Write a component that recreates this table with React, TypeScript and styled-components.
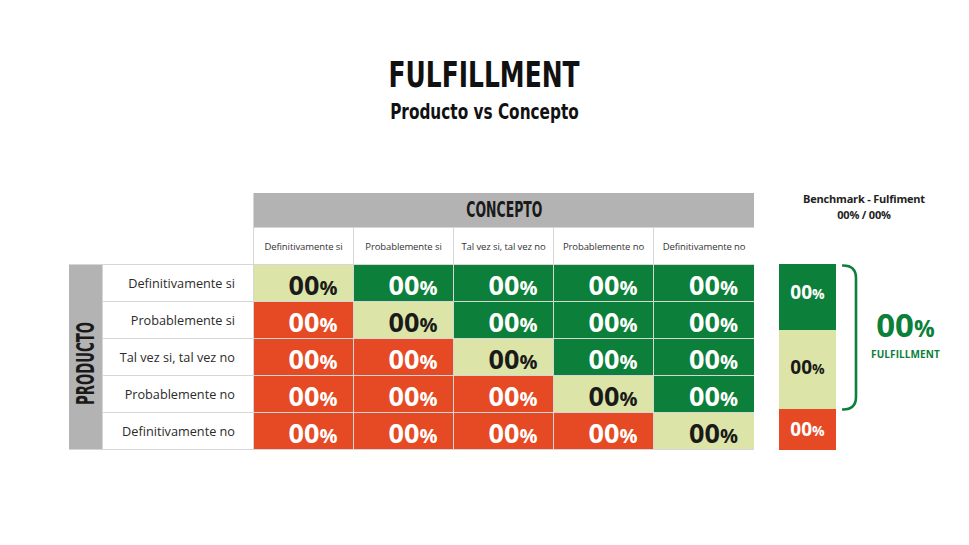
import React from "react";
import styled, { createGlobalStyle } from "styled-components";

const GREEN = "#0c7f3a";
const LIGHT = "#dce5a7";
const RED = "#e64a24";
const GRAY = "#b3b3b3";

const Global = createGlobalStyle`
  html, body { margin: 0; padding: 0; background: #fff; }
  body { font-family: "Open Sans", "Noto Sans", sans-serif; }
`;

const Page = styled.div`
  width: 969px;
  height: 545px;
  background: #fff;
  display: flex;
  flex-direction: column;
  overflow: hidden;
`;

const TitleBlock = styled.header`
  padding-top: 57px;
  display: flex;
  flex-direction: column;
  align-items: center;
  color: #111;
  font-family: "DejaVu Sans Condensed", "Liberation Sans", sans-serif;
  font-weight: 700;
`;

const Title = styled.h1`
  margin: 0;
  font-size: 36px;
  line-height: 36px;
  font-weight: 700;
  transform: scaleX(0.77);
  white-space: nowrap;
`;

const Subtitle = styled.h2`
  margin: 9px 0 0;
  font-size: 21px;
  line-height: 21px;
  font-weight: 700;
  transform: scaleX(0.81);
  white-space: nowrap;
`;

const Main = styled.main`
  display: flex;
  align-items: flex-start;
  padding-left: 69px;
  margin-top: 70px;
`;

const Table = styled.div`
  display: grid;
  grid-template-columns: 33px 150px 99px 99px 99px 99px 100px;
  grid-template-rows: 34px 36px repeat(5, 36px);
  gap: 1px;
  background: #d6d6d6;
  padding-bottom: 1px;
`;

const Corner = styled.div`
  grid-column: 1 / 3;
  grid-row: 1 / 3;
  background: #fff;
`;

const ConceptHeader = styled.div`
  grid-column: 3 / 8;
  grid-row: 1;
  background: ${GRAY};
  display: flex;
  align-items: center;
  justify-content: center;
`;

const CondensedLabel = styled.span<{ $scale: number; $size: number }>`
  display: inline-block;
  white-space: nowrap;
  font-family: "DejaVu Sans Condensed", "Liberation Sans", sans-serif;
  font-weight: 700;
  font-size: ${(p) => p.$size}px;
  line-height: 1;
  color: #1a1a1a;
  transform: scaleX(${(p) => p.$scale});
`;

const ProductBar = styled.div`
  grid-column: 1;
  grid-row: 3 / 8;
  background: ${GRAY};
  display: flex;
  align-items: center;
  justify-content: center;
  padding-top: 12px;
  overflow: visible;
`;

const VerticalLabel = styled(CondensedLabel)`
  transform: rotate(-90deg) scaleX(${(p) => p.$scale});
`;

const ColHeader = styled.div`
  background: #fff;
  display: flex;
  align-items: center;
  justify-content: center;
  font-size: 9.5px;
  color: #333;
  white-space: nowrap;
  letter-spacing: -0.1px;
`;

const RowLabel = styled.div`
  background: #fff;
  display: flex;
  align-items: center;
  justify-content: flex-end;
  padding-right: 18px;
  font-size: 12.7px;
  color: #2b2b2b;
  white-space: nowrap;
`;

type Tone = "g" | "l" | "r";

const toneBg = (t: Tone) => (t === "g" ? GREEN : t === "l" ? LIGHT : RED);
const toneFg = (t: Tone) => (t === "l" ? "#1a1a1a" : "#fff");

const Cell = styled.div<{ $tone: Tone }>`
  background: ${(p) => toneBg(p.$tone)};
  color: ${(p) => toneFg(p.$tone)};
  display: flex;
  align-items: center;
  justify-content: center;
  padding-left: 19px;
  padding-top: 3px;
`;

const Num = styled.span<{ $size: number; $lh?: string }>`
  font-family: "Open Sans", sans-serif;
  font-weight: 700;
  font-size: ${(p) => p.$size}px;
  line-height: ${(p) => p.$lh ?? "1"};
  white-space: nowrap;
`;

const Pct = styled.span<{ $size: number }>`
  font-size: ${(p) => p.$size}px;
  font-weight: 700;
`;

const Right = styled.aside`
  margin-left: 25px;
  width: 170px;
  display: flex;
  flex-direction: column;
`;

const BenchLabel = styled.div`
  height: 73px;
  margin-top: -2px;
  text-align: center;
  font-size: 11px;
  line-height: 16px;
  font-weight: 700;
  color: #222;
  letter-spacing: -0.2px;
`;

const BenchRow = styled.div`
  display: flex;
  align-items: flex-start;
`;

const BenchCol = styled.div`
  width: 57px;
  display: flex;
  flex-direction: column;
`;

const BenchBlock = styled.div<{ $tone: Tone; $h: number; $shift?: number }>`
  height: ${(p) => p.$h}px;
  background: ${(p) => toneBg(p.$tone)};
  color: ${(p) => toneFg(p.$tone)};
  display: flex;
  align-items: center;
  justify-content: center;
  padding-bottom: ${(p) => p.$shift ?? 0}px;
  box-sizing: border-box;
`;

const Bracket = styled.svg`
  display: block;
  margin-left: 6px;
  flex: none;
`;

const Summary = styled.div`
  width: 87px;
  height: 146px;
  display: flex;
  flex-direction: column;
  align-items: center;
  justify-content: center;
  padding-bottom: 12px;
  box-sizing: border-box;
  color: ${GREEN};
`;

const SummaryCaption = styled.div`
  font-size: 10px;
  line-height: normal;
  font-weight: 700;
  letter-spacing: 0.1px;
`;

const options = [
  "Definitivamente si",
  "Probablemente si",
  "Tal vez si, tal vez no",
  "Probablemente no",
  "Definitivamente no",
];

const matrix: Tone[][] = [
  ["l", "g", "g", "g", "g"],
  ["r", "l", "g", "g", "g"],
  ["r", "r", "l", "g", "g"],
  ["r", "r", "r", "l", "g"],
  ["r", "r", "r", "r", "l"],
];

const Value = ({ size, pct, lh }: { size: number; pct: number; lh?: string }) => (
  <Num $size={size} $lh={lh}>
    00<Pct $size={pct}>%</Pct>
  </Num>
);

export default function App() {
  return (
    <Page>
      <Global />
      <TitleBlock>
        <Title>FULFILLMENT</Title>
        <Subtitle>Producto vs Concepto</Subtitle>
      </TitleBlock>
      <Main>
        <Table>
          <Corner />
          <ConceptHeader>
            <CondensedLabel $size={22} $scale={0.63}>
              CONCEPTO
            </CondensedLabel>
          </ConceptHeader>
          {options.map((o, i) => (
            <ColHeader key={"h" + i} style={{ gridColumn: i + 3, gridRow: 2 }}>
              {o}
            </ColHeader>
          ))}
          <ProductBar>
            <VerticalLabel $size={25} $scale={0.59}>
              PRODUCTO
            </VerticalLabel>
          </ProductBar>
          {options.map((o, r) => (
            <React.Fragment key={"r" + r}>
              <RowLabel style={{ gridColumn: 2, gridRow: r + 3 }}>{o}</RowLabel>
              {matrix[r].map((t, c) => (
                <Cell key={c} $tone={t} style={{ gridColumn: c + 3, gridRow: r + 3 }}>
                  <Value size={27} pct={20} />
                </Cell>
              ))}
            </React.Fragment>
          ))}
        </Table>
        <Right>
          <BenchLabel>
            Benchmark - Fulfiment
            <br />
            00% / 00%
          </BenchLabel>
          <BenchRow>
            <BenchCol>
              <BenchBlock $tone="g" $h={66} $shift={10}>
                <Value size={19} pct={14} />
              </BenchBlock>
              <BenchBlock $tone="l" $h={79} $shift={4}>
                <Value size={19} pct={14} />
              </BenchBlock>
              <BenchBlock $tone="r" $h={41}>
                <Value size={19} pct={14} />
              </BenchBlock>
            </BenchCol>
            <Bracket width="20" height="147" viewBox="0 0 20 147">
              <path
                d="M1 1.5 Q14 1.5 14 14 L14 133 Q14 145.5 1 145.5"
                fill="none"
                stroke={GREEN}
                strokeWidth="2.6"
                strokeLinecap="round"
              />
            </Bracket>
            <Summary>
              <Value size={33} pct={23} lh="normal" />
              <SummaryCaption>FULFILLMENT</SummaryCaption>
            </Summary>
          </BenchRow>
        </Right>
      </Main>
    </Page>
  );
}
